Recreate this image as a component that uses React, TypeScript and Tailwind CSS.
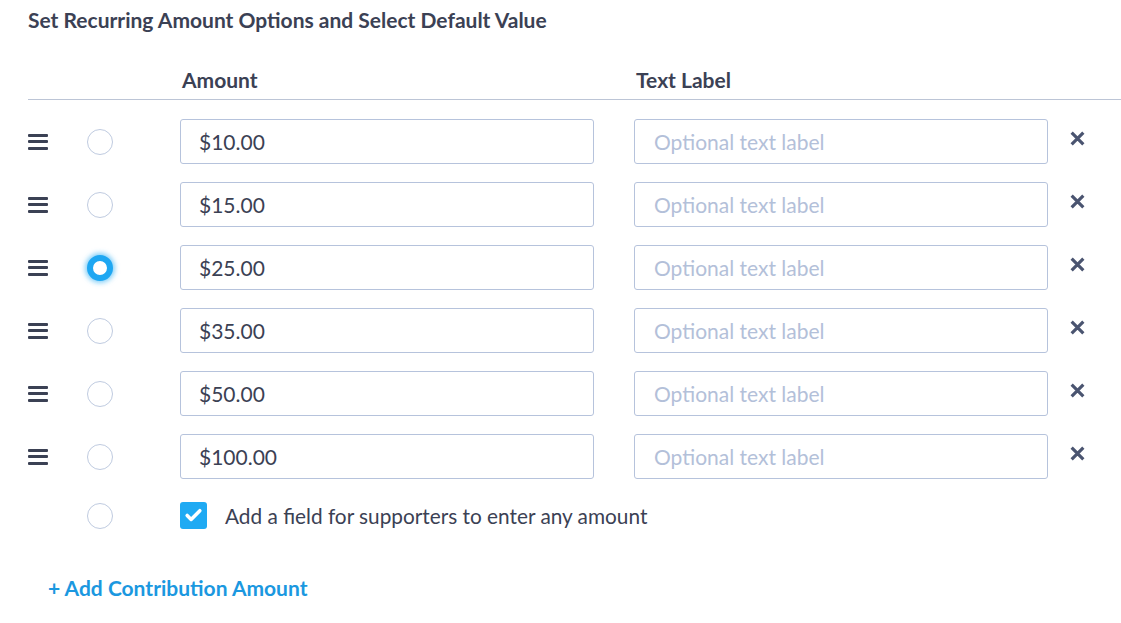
import { Check } from 'lucide-react';

const amounts = ['$10.00', '$15.00', '$25.00', '$35.00', '$50.00', '$100.00'];
const DEFAULT_INDEX = 2;

function Grip() {
  return (
    <div className="flex w-[20px] flex-col gap-[3.5px]">
      <span className="h-[3px] w-full rounded-[1px] bg-[#3b4154]" />
      <span className="h-[3px] w-full rounded-[1px] bg-[#3b4154]" />
      <span className="h-[3px] w-full rounded-[1px] bg-[#3b4154]" />
    </div>
  );
}

function Radio({ checked }: { checked?: boolean }) {
  if (checked) {
    return (
      <div className="h-[26px] w-[26px] rounded-full border-[6px] border-[#1ea7f2] bg-white shadow-[0_0_5px_2px_rgba(30,167,242,0.55)]" />
    );
  }
  return <div className="h-[26px] w-[26px] rounded-full border border-[#bfcbe0] bg-white" />;
}

function CloseIcon() {
  return (
    <svg width="17" height="17" viewBox="0 0 16 16" className="text-[#4a5470]">
      <path d="M2.5 2.5 L13.5 13.5 M13.5 2.5 L2.5 13.5" stroke="currentColor" strokeWidth="3" strokeLinecap="butt" />
    </svg>
  );
}

export default function App() {
  return (
    <div className="min-h-screen bg-white font-['Lato','Open_Sans',sans-serif] text-[#3b4154]">
      <div className="pl-[28px] pt-[7px]">
        <h2 className="text-[21px] font-bold leading-[26px]">Set Recurring Amount Options and Select Default Value</h2>

        <div className="mt-[34px] flex border-b border-[#bcc5d6] pb-[6px] text-[21px] font-bold leading-[26px]">
          <div className="ml-[154px] w-[454px]">Amount</div>
          <div>Text Label</div>
        </div>

        <div className="mt-[19px] flex flex-col gap-[18px]">
          {amounts.map((a, i) => (
            <div key={a} className="flex h-[45px] items-center">
              <Grip />
              <div className="ml-[39px]">
                <Radio checked={i === DEFAULT_INDEX} />
              </div>
              <input
                readOnly
                value={a}
                className="ml-[67px] h-[45px] w-[414px] rounded-[3px] border border-[#b6c3dc] px-[18px] text-[21px] text-[#3b4154] outline-none"
              />
              <input
                readOnly
                placeholder="Optional text label"
                className="ml-[40px] h-[45px] w-[414px] rounded-[3px] border border-[#b6c3dc] px-[19px] text-[21px] text-[#3b4154] outline-none placeholder:text-[#b3c0d9]"
              />
              <div className="ml-[21px] -mt-[7px]">
                <CloseIcon />
              </div>
            </div>
          ))}
        </div>

        <div className="mt-[23px] flex items-center">
          <div className="ml-[59px]">
            <Radio />
          </div>
          <div className="ml-[67px] flex h-[27px] w-[27px] items-center justify-center rounded-[3px] bg-[#1faaf3]">
            <Check className="h-[19px] w-[19px] text-white" strokeWidth={4.5} />
          </div>
          <span className="ml-[18px] text-[20.8px] leading-[26px]">Add a field for supporters to enter any amount</span>
        </div>

        <button className="ml-[20px] mt-[46px] block text-[21px] font-bold leading-[26px] text-[#1b98e0]">+ Add Contribution Amount</button>
      </div>
    </div>
  );
}
